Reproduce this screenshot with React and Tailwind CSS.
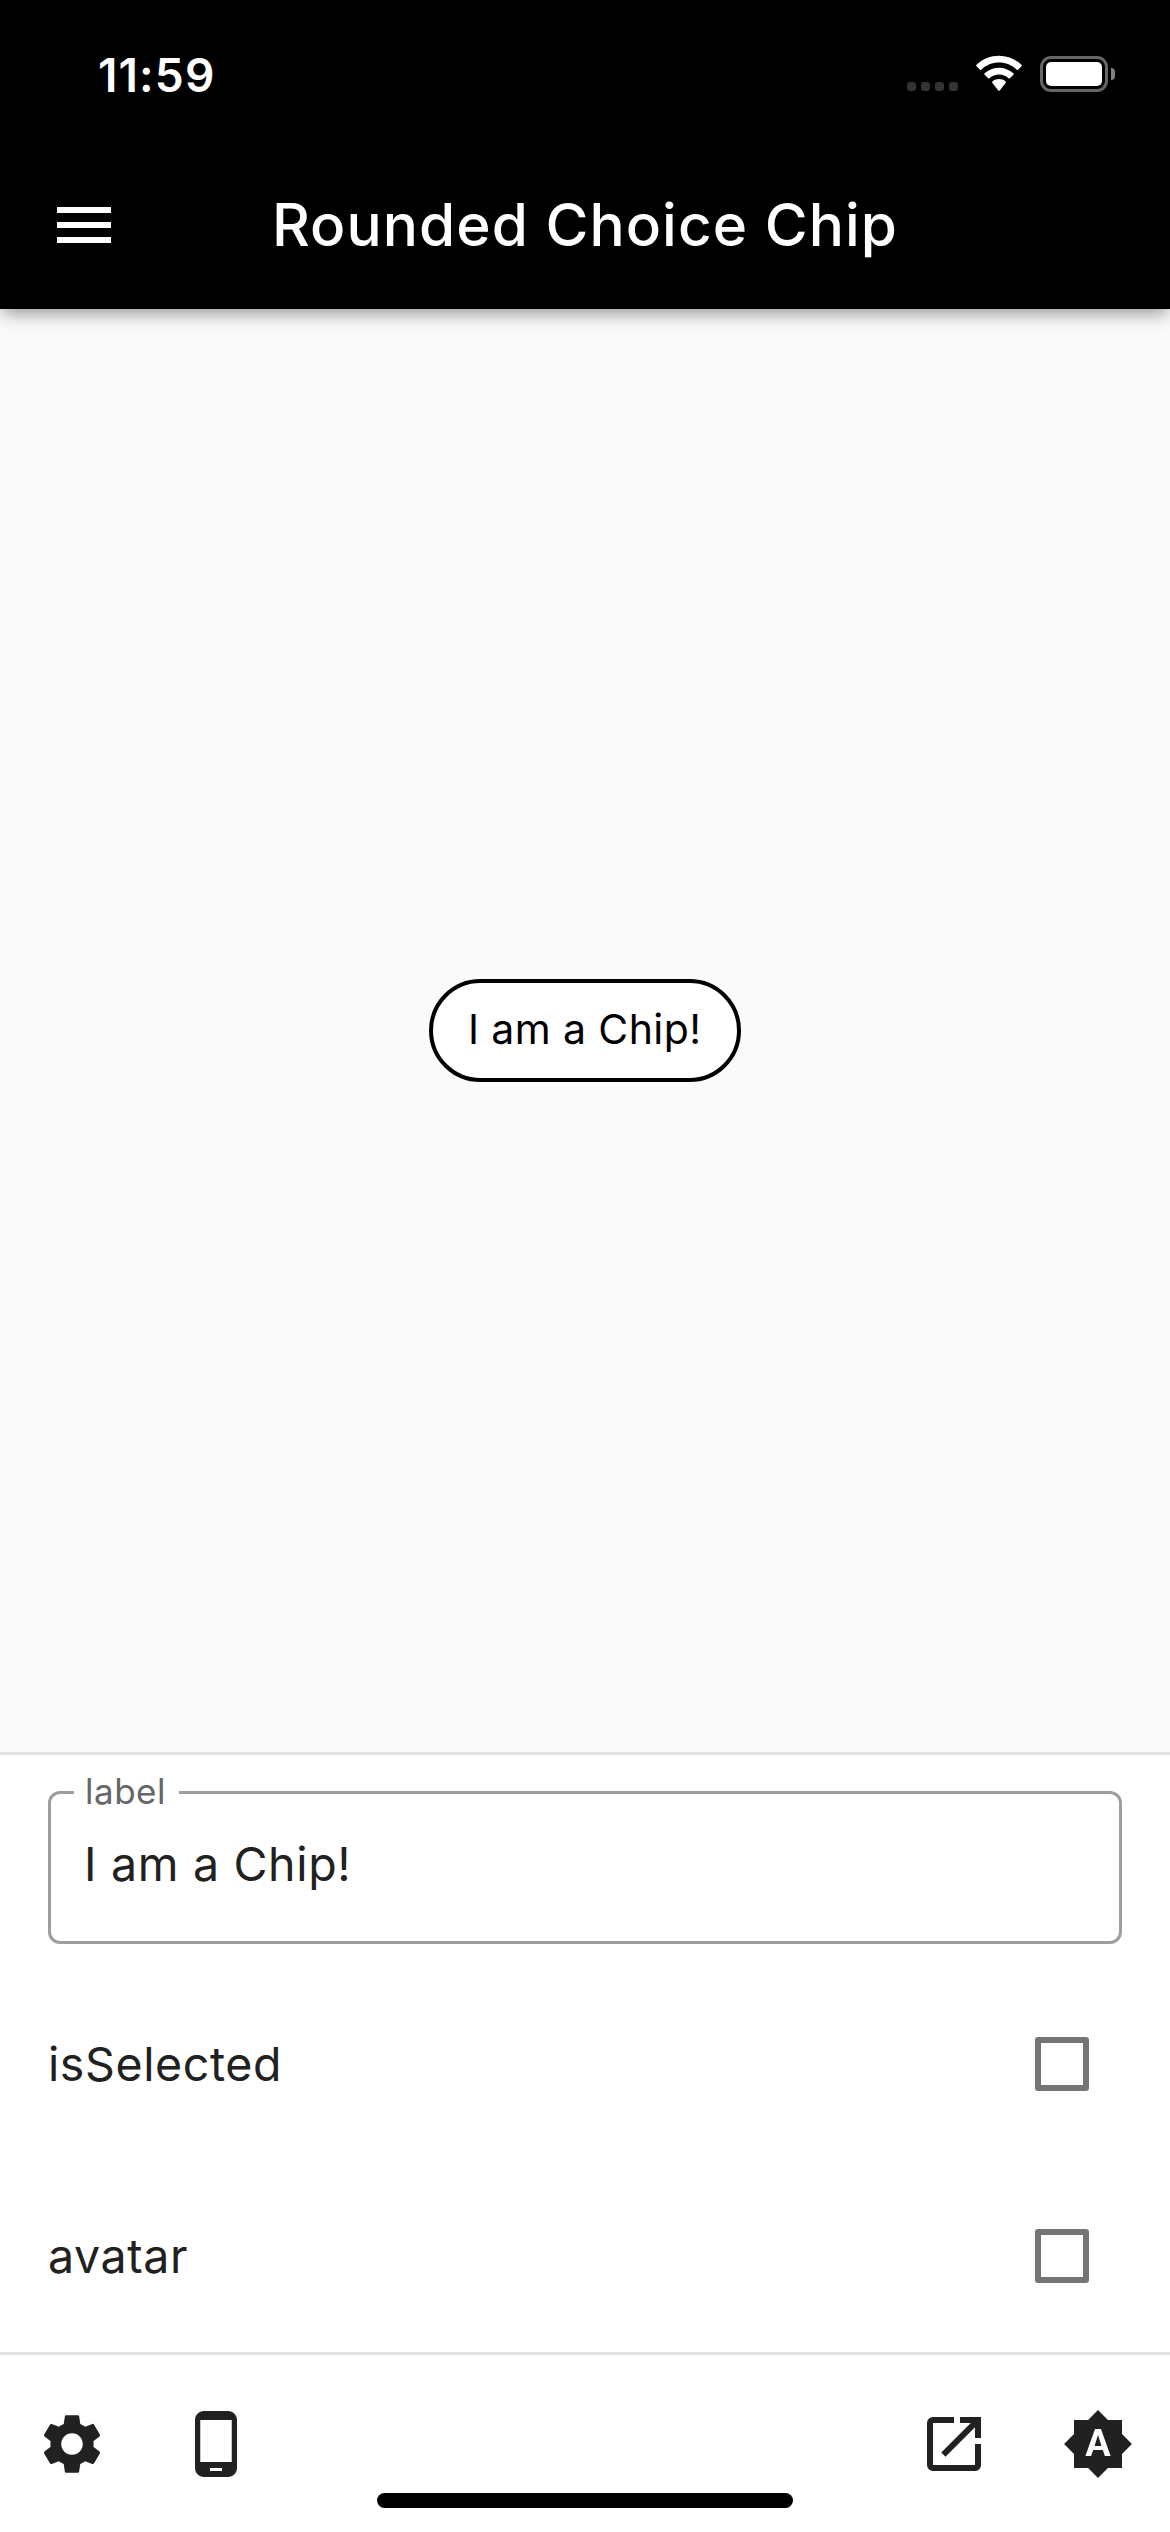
import {
  MdBrightnessAuto,
  MdMenu,
  MdOpenInNew,
  MdPhoneAndroid,
  MdSettings,
} from "react-icons/md";

function WifiIcon() {
  return (
    <svg className="h-9 w-12" viewBox="0 0 48 36" fill="#fff">
      <path d="M24 7.6c6.7 0 13 2.6 17.7 7.1.4.4.9.4 1.3 0l3.5-3.5c.4-.4.4-1 0-1.4C33.9-2.3 14.1-2.3 1.5 9.8c-.4.4-.4 1 0 1.4L5 14.7c.4.4.9.4 1.3 0C11 10.2 17.3 7.6 24 7.6z" />
      <path d="M24 19.6c3.5 0 6.9 1.3 9.5 3.6.4.4.9.4 1.3 0l3.6-3.5c.4-.4.4-1 0-1.4-8.1-7.5-20.7-7.5-28.8 0-.4.4-.4 1 0 1.4l3.6 3.5c.4.4.9.4 1.3 0 2.6-2.3 6-3.6 9.5-3.6z" />
      <path d="M30.6 27.9c.4-.4.4-1.1 0-1.4-3.8-3.2-9.4-3.2-13.2 0-.4.3-.4 1 0 1.4l5.9 7.5c.4.5 1 .5 1.4 0z" />
    </svg>
  );
}

function BatteryIcon() {
  return (
    <div className="flex items-center gap-[3px]">
      <div className="h-9 w-[68px] rounded-[11px] border-[3px] border-[#666] p-[3px]">
        <div className="h-full w-full rounded-[5px] bg-white" />
      </div>
      <div className="h-3 w-1 rounded-r-full bg-[#808080]" />
    </div>
  );
}

function StatusBar() {
  return (
    <div className="flex h-[141px] items-start justify-between pl-[98px] pr-[55px]">
      <span className="mt-[50px] text-[46px] leading-[50px] font-semibold tracking-[1.1px]">
        11:59
      </span>
      <div className="mt-[55px] flex items-start">
        <div className="mt-[27px] flex gap-[5px]">
          {[0, 1, 2, 3].map((dot) => (
            <span key={dot} className="size-[9px] rounded-[3px] bg-[#333]" />
          ))}
        </div>
        <div className="ml-[17px]">
          <WifiIcon />
        </div>
        <div className="mt-px ml-[17px]">
          <BatteryIcon />
        </div>
      </div>
    </div>
  );
}

function KnobRow({ name }) {
  return (
    <label className="flex h-48 items-center justify-between pr-[33px]">
      <span className="text-[46.5px] leading-[60px] tracking-[0.6px]">{name}</span>
      <span className="size-[54px] rounded-[3px] border-[6px] border-[#757575]" />
    </label>
  );
}

export default function App() {
  return (
    <div className="flex h-[2532px] w-[1170px] flex-col overflow-hidden bg-white font-['Inter',sans-serif] text-[#212121]">
      <header className="z-10 h-[309px] shrink-0 bg-black text-white shadow-[0_7px_16px_-2px_rgba(0,0,0,0.38)]">
        <StatusBar />
        <div className="grid h-[168px] grid-cols-[168px_1fr_168px] items-center">
          <button className="flex size-[168px] items-center justify-center pr-3">
            <MdMenu className="size-[72px] translate-x-[6px]" />
          </button>
          <h1 className="text-center text-[58.5px] leading-[72px] font-medium tracking-[1.06px] whitespace-nowrap">
            Rounded Choice Chip
          </h1>
        </div>
      </header>

      <main className="flex h-[1443px] shrink-0 items-center justify-center bg-[#fafafa]">
        <button className="flex h-[103px] w-[312px] items-center rounded-full border-4 border-black bg-white pb-[3px] pl-[35px] text-[41px] leading-[50px] tracking-[0.4px] whitespace-nowrap text-black">
          I am a Chip!
        </button>
      </main>

      <section className="h-[600px] shrink-0 border-t-[3px] border-[#e0e0e0] px-12 pt-9">
        <div className="relative mb-6 flex h-[153px] items-start rounded-xl border-[3px] border-[#9e9e9e] pt-[40px] pl-[33px]">
          <span className="absolute top-[-24px] left-[23px] bg-white pr-[13px] pl-[11px] text-[35px] leading-[42px] tracking-[0.5px] text-[#666]">
            label
          </span>
          <span className="text-[46.5px] leading-[60px] tracking-[0.68px]">I am a Chip!</span>
        </div>
        <KnobRow name="isSelected" />
        <KnobRow name="avatar" />
      </section>

      <footer className="flex h-[180px] shrink-0 flex-col border-t-[3px] border-[#e0e0e0]">
        <div className="flex h-[138px] items-end justify-between px-9 pb-[13px]">
          <div className="flex gap-[72px]">
            <MdSettings className="size-[72px]" />
            <MdPhoneAndroid className="size-[72px]" />
          </div>
          <div className="flex gap-[72px]">
            <MdOpenInNew className="size-[72px]" />
            <MdBrightnessAuto className="size-[72px]" />
          </div>
        </div>
        <div className="mx-auto h-[15px] w-[416px] rounded-full bg-black" />
      </footer>
    </div>
  );
}
